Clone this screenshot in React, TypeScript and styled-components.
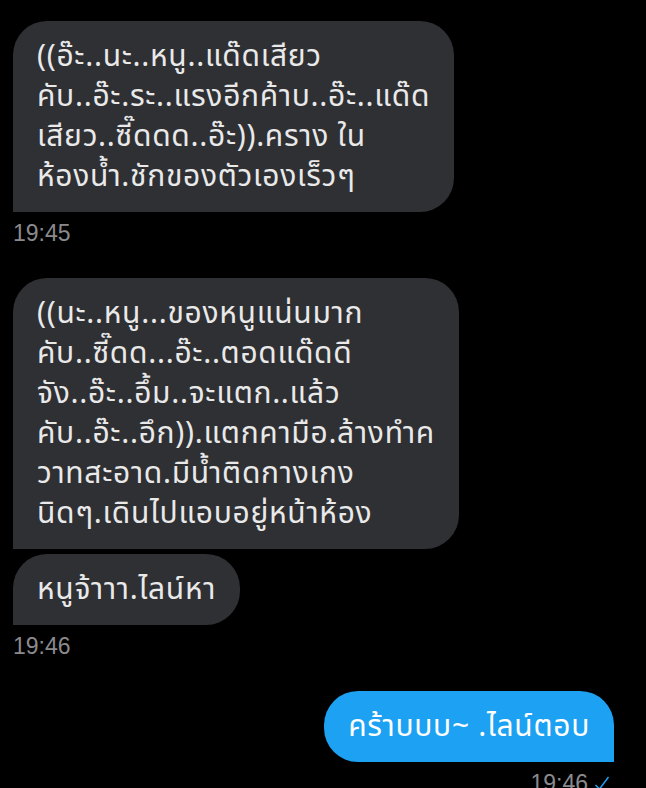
import styled, { createGlobalStyle } from "styled-components";

const GlobalStyle = createGlobalStyle`
  html, body {
    margin: 0;
    padding: 0;
    background: #000;
  }
  body {
    width: 646px;
    height: 788px;
    overflow: hidden;
    font-family: "Noto Sans Thai", "Noto Sans", "DejaVu Sans", sans-serif;
  }
`;

type msg = { lines: string[] };

const groups: { mine: boolean; time: string; messages: msg[] }[] = [
  {
    mine: false,
    time: "19:45",
    messages: [
      {
        lines: [
          "((อ๊ะ..นะ..หนู..แด๊ดเสียว",
          "คับ..อ๊ะ.ระ..แรงอีกค้าบ..อ๊ะ..แด๊ด",
          "เสียว..ซี๊ดดด..อ๊ะ)).คราง ใน",
          "ห้องน้ำ.ชักของตัวเองเร็วๆ",
        ],
      },
    ],
  },
  {
    mine: false,
    time: "19:46",
    messages: [
      {
        lines: [
          "((นะ..หนู...ของหนูแน่นมาก",
          "คับ..ซี๊ดด...อ๊ะ..ตอดแด๊ดดี",
          "จัง..อ๊ะ..อึ้ม..จะแตก..แล้ว",
          "คับ..อ๊ะ..อึก)).แตกคามือ.ล้างทำค",
          "วาทสะอาด.มีน้ำติดกางเกง",
          "นิดๆ.เดินไปแอบอยู่หน้าห้อง",
        ],
      },
      { lines: ["หนูจ้าาา.ไลน์หา"] },
    ],
  },
  {
    mine: true,
    time: "19:46",
    messages: [{ lines: ["คร้าบบบ~ .ไลน์ตอบ"] }],
  },
];

const App = () => {
  return (
    <Screen>
      <GlobalStyle />
      {groups.map((g, gi) => (
        <Group key={gi} $mine={g.mine}>
          {g.messages.map((m, mi) => (
            <Bubble key={mi} $mine={g.mine}>
              {m.lines.map((l, li) => (
                <Line key={li}>{l}</Line>
              ))}
            </Bubble>
          ))}
          <Time $mine={g.mine}>
            {g.time}
            {g.mine && (
              <svg width="16" height="16" viewBox="0 0 16 16">
                <path d="M1.5 10 L5.5 14 L14.5 2" fill="none" stroke="#1da1f2" strokeWidth="1.5" />
              </svg>
            )}
          </Time>
        </Group>
      ))}
    </Screen>
  );
};

export default App;

const Screen = styled.div`
  display: flex;
  flex-direction: column;
  gap: 31px;
  padding: 21px 32px 0 13px;
`;

const Group = styled.div<{ $mine: boolean }>`
  display: flex;
  flex-direction: column;
  align-items: ${(p) => (p.$mine ? "flex-end" : "flex-start")};
  gap: 5px;
`;

const Bubble = styled.div<{ $mine: boolean }>`
  box-sizing: border-box;
  padding: 16px 24px 15px 24px;
  border-radius: ${(p) => (p.$mine ? "34px 34px 0 34px" : "34px 34px 34px 0")};
  background: ${(p) => (p.$mine ? "#1da1f2" : "#2f3033")};
  color: ${(p) => (p.$mine ? "#fff" : "#e9e9ea")};
  font-size: 30px;
  letter-spacing: 0.7px;
  line-height: 40px;
`;

const Line = styled.div`
  white-space: nowrap;
`;

const Time = styled.div<{ $mine: boolean }>`
  display: flex;
  align-items: center;
  gap: 6px;
  padding-top: 2px;
  padding-right: ${(p) => (p.$mine ? "4px" : "0")};
  font-family: "Liberation Sans", Arial, sans-serif;
  font-size: 23px;
  line-height: 28px;
  color: #8a8a8e;
`;
